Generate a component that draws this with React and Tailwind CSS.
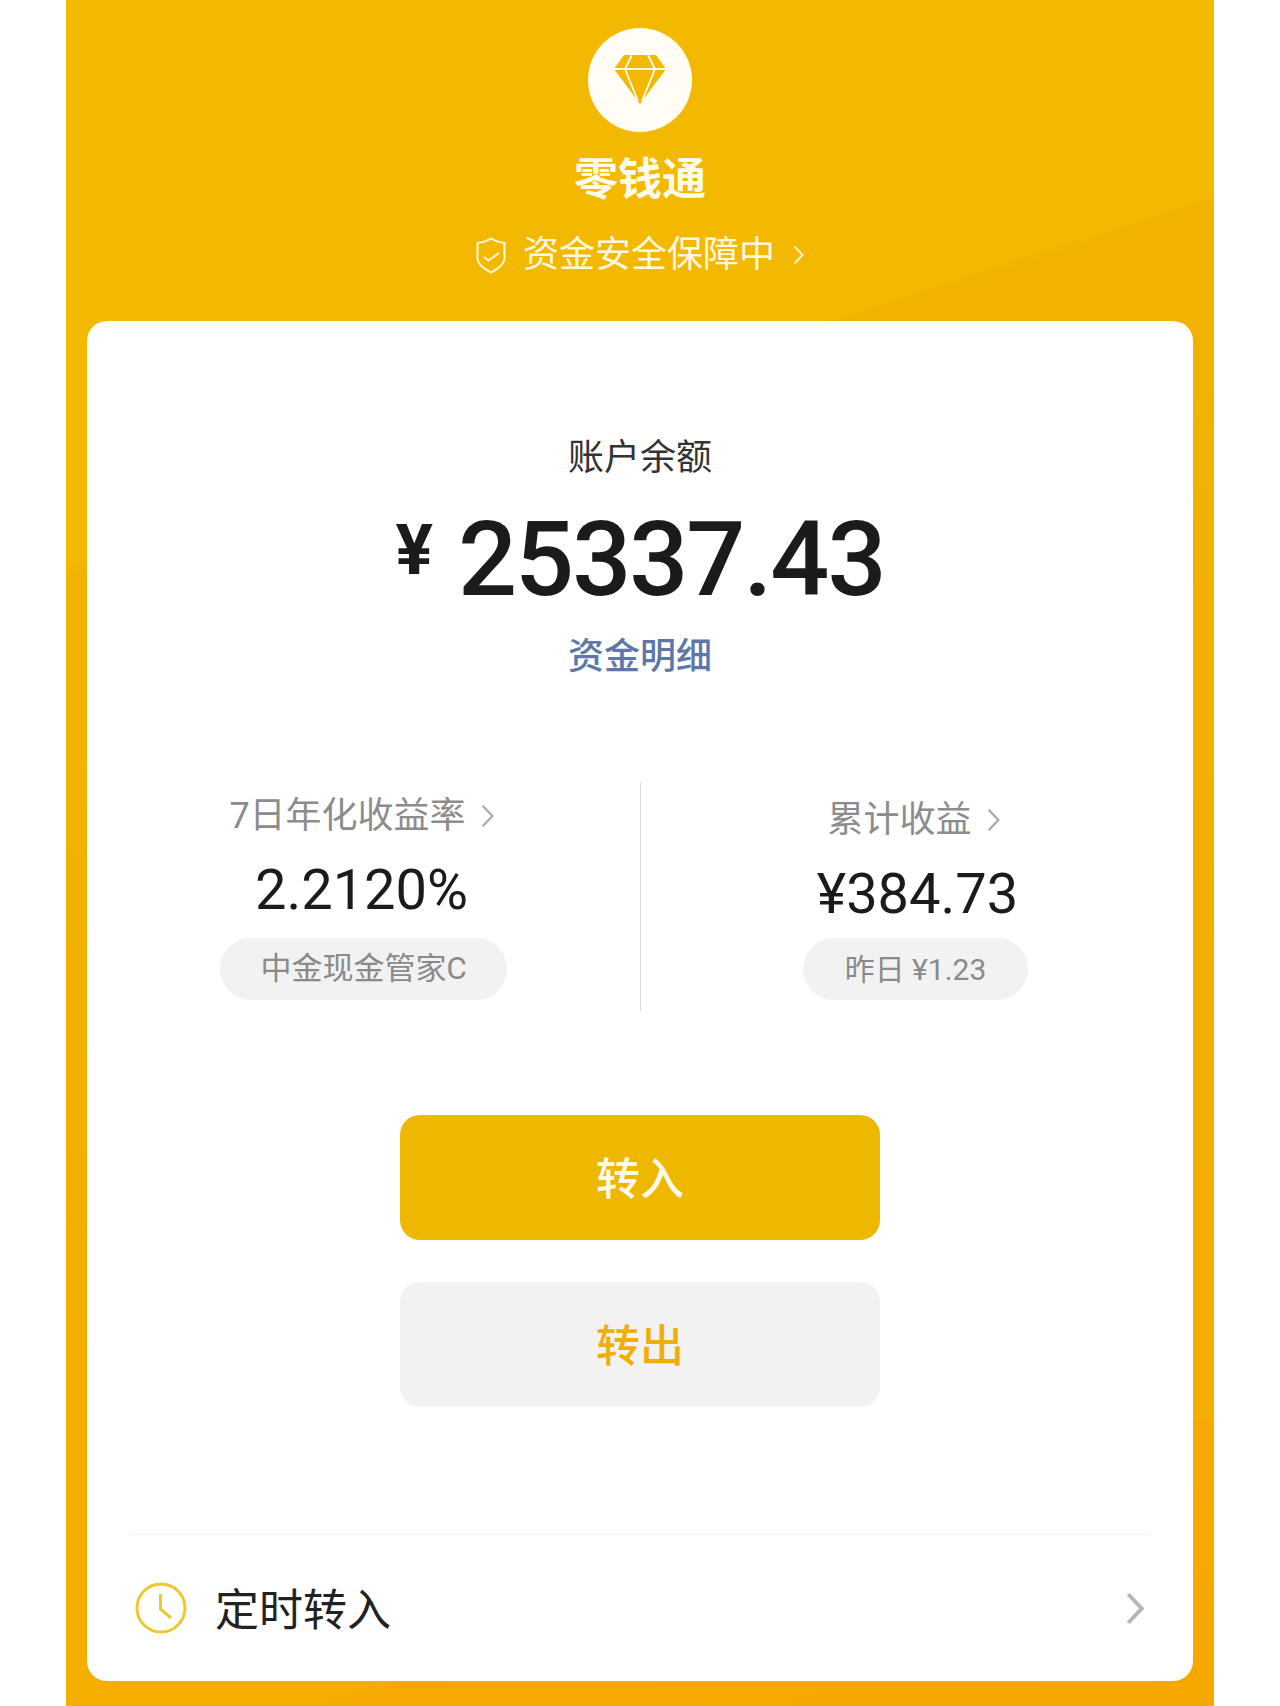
import React from 'react';

const Chevron = ({ className, stroke = 'currentColor', width = 2 }) => (
  <svg viewBox="0 0 12 22" className={className} fill="none" stroke={stroke} strokeWidth={width}>
    <path d="M1.5 1.5 L10.5 11 L1.5 20.5" />
  </svg>
);

function StatColumn({ label, labelClass, value, valueClass, pill, pillClass }) {
  return (
    <div className="flex flex-col items-center">
      <div className={`flex items-center h-[50px] text-[36px] text-[#8c8c8c] ${labelClass}`}>
        <span>{label}</span>
        <Chevron className="w-[13px] h-[26px] ml-[15px] text-[#a8a8a8]" />
      </div>
      <div className={`h-[70px] flex items-center text-[56px] text-[#1b1b1b] ${valueClass}`}>{value}</div>
      <div className={`h-[62px] rounded-full bg-[#f2f2f2] flex items-center justify-center text-[#8a8a8a] ${pillClass}`}>
        {pill}
      </div>
    </div>
  );
}

export default function App() {
  return (
    <div className="h-[1706px] w-[1280px] overflow-hidden bg-white px-[66px] font-['Roboto','Noto_Sans_CJK_SC',sans-serif]">
      <div className="h-full bg-[linear-gradient(162deg,#f2b900_0%,#f2b900_27.3%,#f1b300_27.6%,#f2b100_46%,#f3af00_60%,#f3ae00_85.8%,#f6a900_86.2%,#f7a800_100%)] px-[21px] pt-[28px]">
        <div className="flex flex-col items-center">
          <div className="w-[104px] h-[104px] rounded-full bg-[#fffdf5] flex items-center justify-center">
            <svg viewBox="0 0 52 50" className="w-[52px] h-[50px]">
              <path d="M10 0 H42 L52 14 L26 49 L0 14 Z" fill="#f2b900" />
              <path d="M0 14 H52 M18 0 L11 14 L24 46 M34 0 L41 14 L28 46" fill="none" stroke="#fffdf5" strokeWidth="1.8" />
            </svg>
          </div>
          <div className="mt-[18px] h-[60px] flex items-center text-[44px] font-bold text-[#fffbea]">零钱通</div>
          <div className="mt-[20px] h-[50px] flex items-center text-[36px] text-[#fff8e0]">
            <svg viewBox="0 0 30 37" className="w-[30px] h-[37px] mr-[17px]" fill="none" stroke="#fff8e0" strokeWidth="2">
              <path d="M15 1.5 C19 4 24 5.5 28.5 6 V21 C28.5 27 22 32 15 35.5 C8 32 1.5 27 1.5 21 V6 C6 5.5 11 4 15 1.5 Z" />
              <path d="M8 20 L12.5 23.5 L23 16" />
            </svg>
            <span>资金安全保障中</span>
            <Chevron className="w-[11px] h-[20px] ml-[18px]" />
          </div>
        </div>

        <div className="mt-[41px] h-[1360px] rounded-[20px] bg-white flex flex-col items-center">
          <div className="mt-[112px] h-[50px] flex items-center text-[36px] text-[#333333]">账户余额</div>
          <div className="mt-[22px] h-[110px] flex items-center text-[#1b1b1b]">
            <span className="self-start text-[70px] leading-[90px] font-bold mr-[25px]">¥</span>
            <span className="text-[104px] font-medium tracking-[-2px]">25337.43</span>
          </div>
          <div className="mt-[17px] h-[50px] flex items-center text-[36px] font-medium text-[#5d78a8]">资金明细</div>

          <div className="mt-[100px] w-full flex justify-center h-[229px]">
            <div className="w-[553px] flex justify-center px-[53px]">
              <StatColumn
                label="7日年化收益率"
                value="2.2120%"
                pill="中金现金管家C"
                pillClass="w-[287px] text-[31px]"
                labelClass="mt-[9px] -ml-[4px]"
                valueClass="mt-[14px] mb-[13px] -ml-[4px]"
              />
            </div>
            <div className="w-px h-full bg-[#dddddd]" />
            <div className="w-[552px] flex justify-center pl-[111px] pr-[114px]">
              <StatColumn
                label="累计收益"
                value="¥384.73"
                valueClass="mt-[17px] mb-[9px] ml-[4px]"
                pill="昨日 ¥1.23"
                pillClass="w-[225px] text-[30px]"
                labelClass="mt-[13px] -mb-[3px] -ml-[4px]"
              />
            </div>
          </div>

          <button className="mt-[104px] w-[480px] h-[125px] pt-[5px] rounded-[20px] bg-[#efb800] text-[44px] font-medium text-[#fffbea]">转入</button>
          <button className="mt-[42px] w-[480px] h-[125px] pt-[5px] rounded-[20px] bg-[#f2f2f2] text-[44px] font-medium text-[#f0ae0a]">转出</button>

          <div className="mt-[127px] w-[1020px] border-t border-[#f3f3f3] h-[147px] flex items-center">
            <svg viewBox="0 0 52 52" className="w-[52px] h-[52px] ml-[5px]" fill="none" stroke="#ecc92e" strokeWidth="3">
              <circle cx="26" cy="26" r="24" />
              <path d="M25.5 12 V27 L36 36" />
            </svg>
            <span className="ml-[28px] pt-[6px] text-[44px] text-[#222222]">定时转入</span>
            <Chevron className="w-[18px] h-[33px] ml-auto mr-[6px]" stroke="#b5b5b5" width={2.6} />
          </div>
        </div>
      </div>
    </div>
  );
}
